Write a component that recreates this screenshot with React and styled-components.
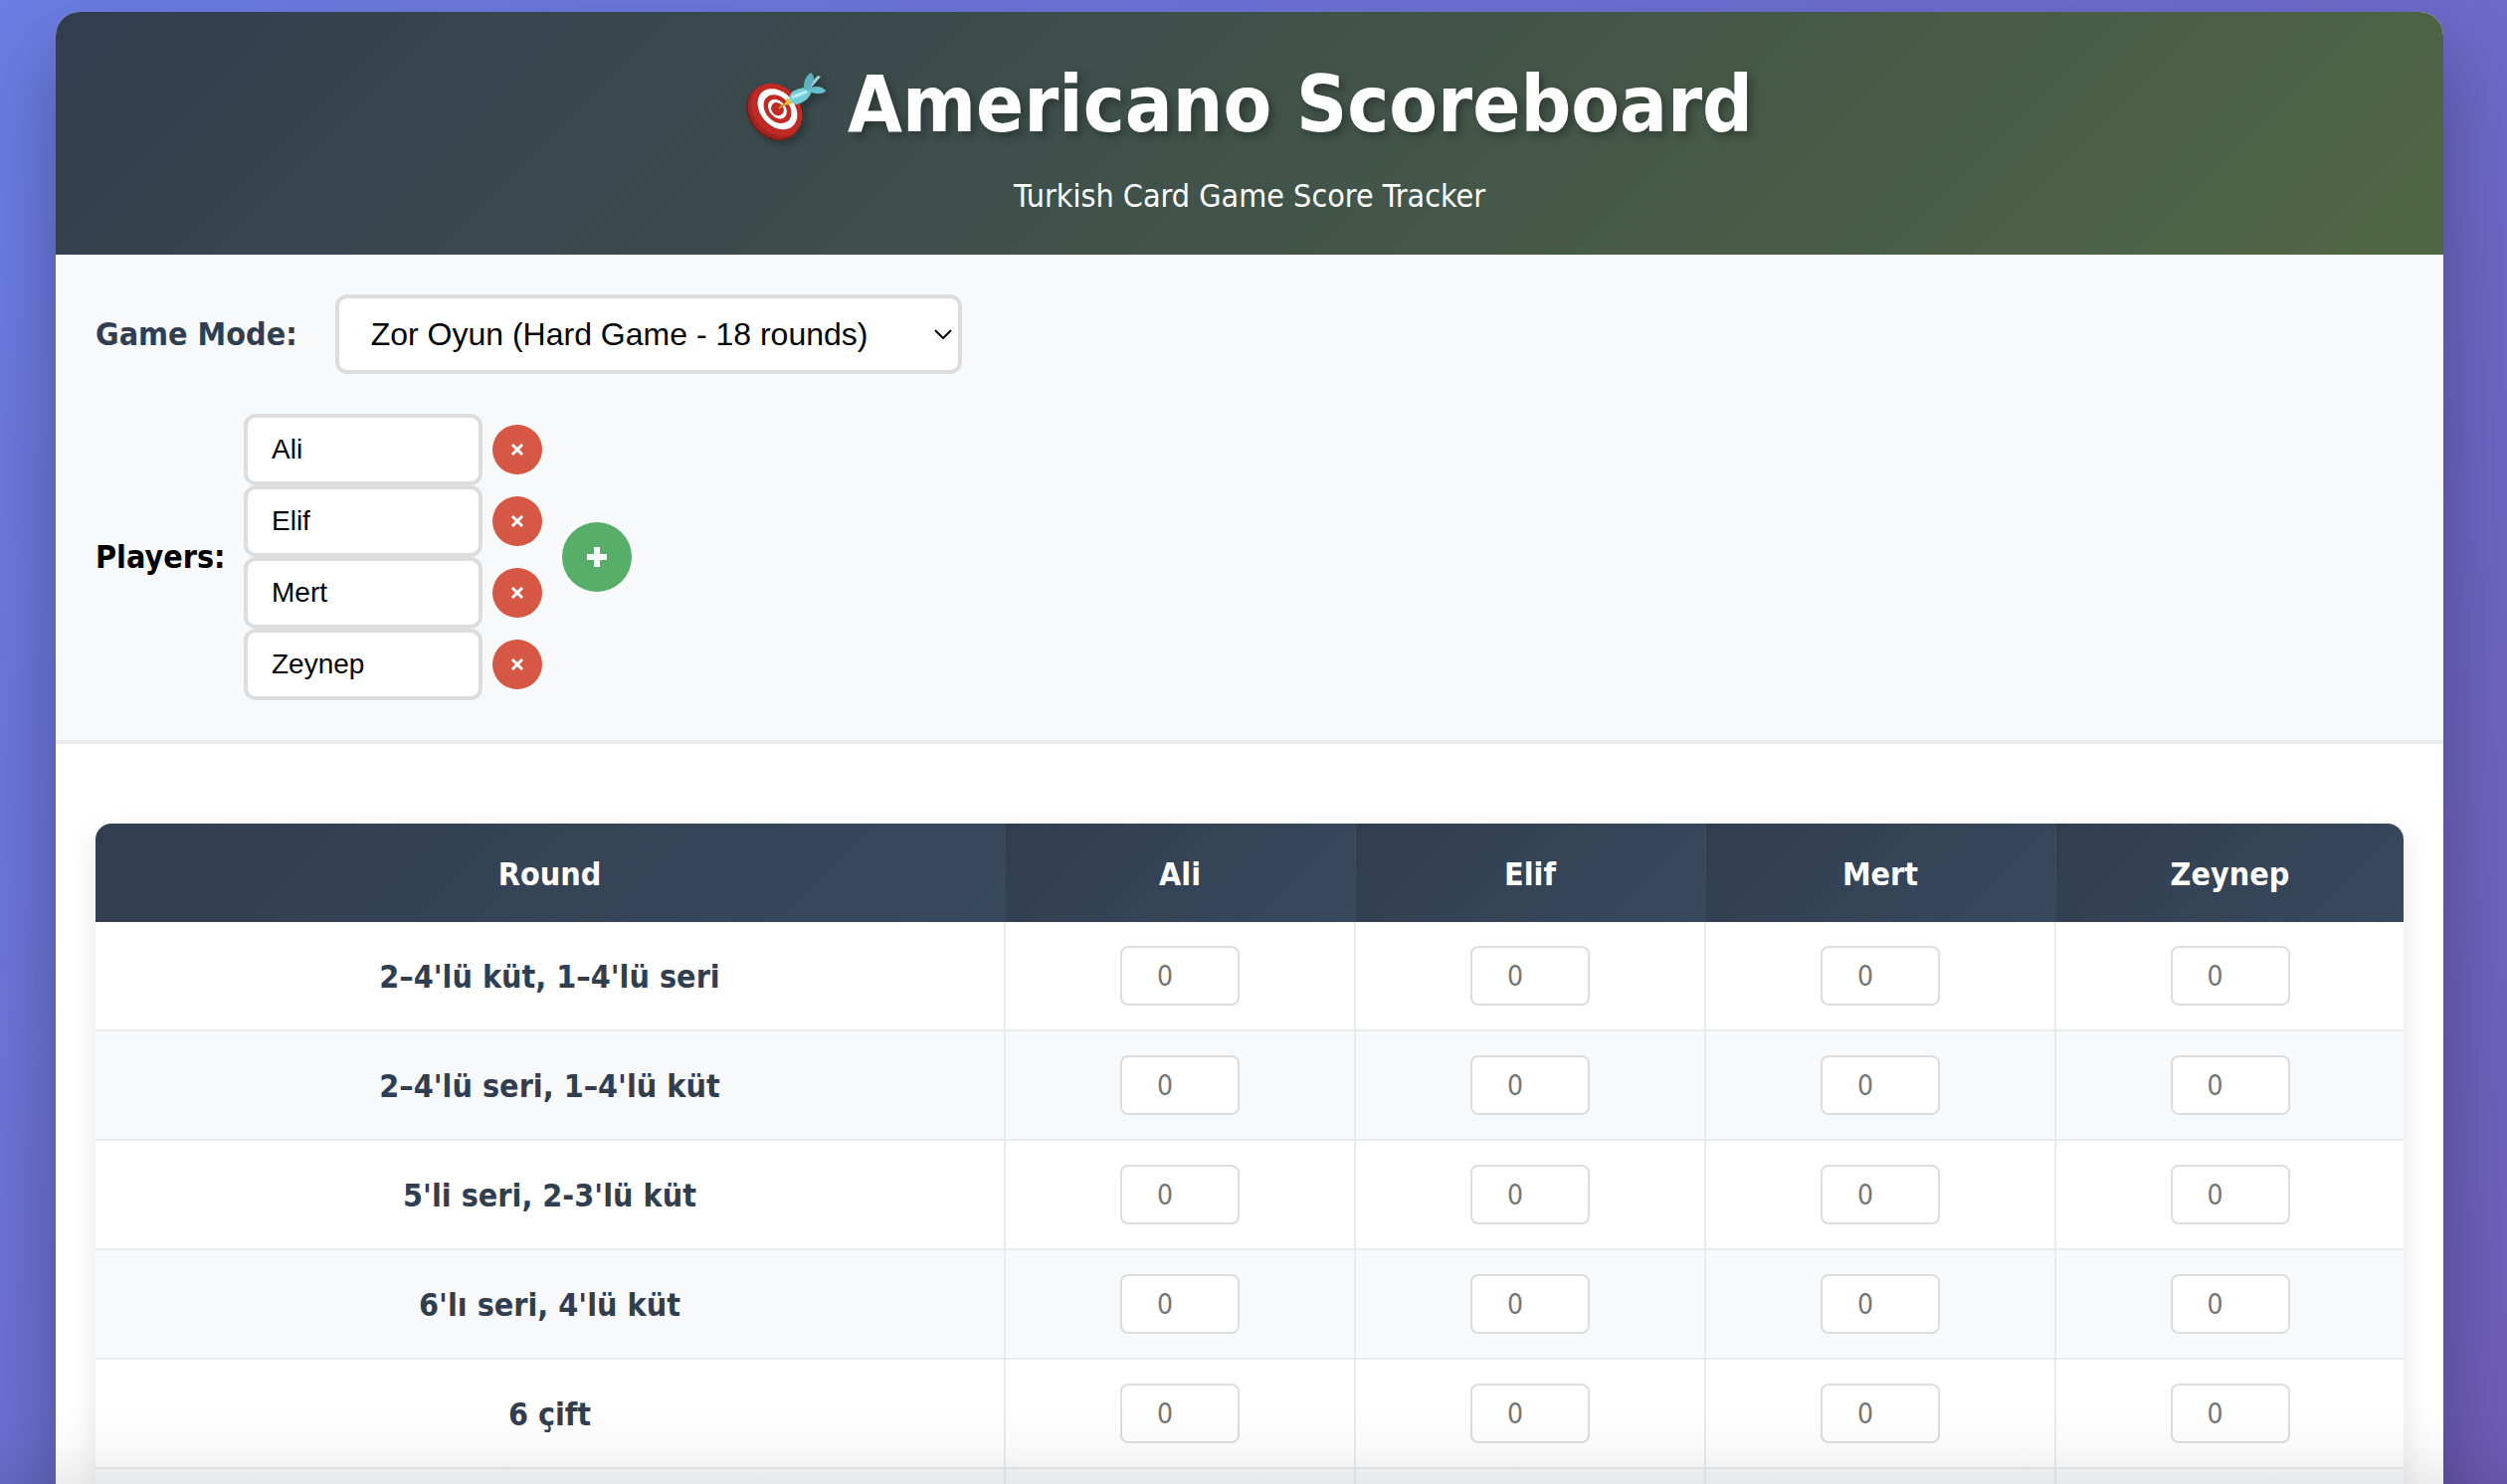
import React, { useState } from "react";
import styled, { createGlobalStyle } from "styled-components";

const ui = `"DejaVu Sans Condensed", "DejaVu Sans", sans-serif`;
const plain = `"Liberation Sans", Arial, sans-serif`;

const GlobalStyle = createGlobalStyle`
  * { box-sizing: border-box; }
  body { margin: 0; font-family: ${ui}; font-stretch: condensed; }
  input, button, select { margin: 0; }
`;

const Page = styled.div`
  position: relative;
  height: 100vh;
  overflow: hidden;
  padding: 12px 64px 0 56px;
  background: linear-gradient(135deg, #6b7de3 0%, #7050a6 143%);
`;

const Card = styled.main`
  background: #fff;
  border-radius: 24px 24px 0 0;
  box-shadow: 0 40px 80px rgba(0, 0, 0, 0.3);
  overflow: hidden;
`;

const Header = styled.header`
  padding: 44px 40px 36px;
  text-align: center;
  color: #fff;
  background: linear-gradient(135deg, #313e50 0%, #506744 100%);
`;

const Title = styled.h1`
  display: flex;
  align-items: center;
  justify-content: center;
  gap: 22px;
  margin: 0 0 20px;
  font-size: 79px;
  line-height: 98px;
  font-weight: 700;
  text-shadow: 4px 4px 8px rgba(0, 0, 0, 0.3);
`;

const Dart = styled.svg`
  width: 80px;
  height: 76px;
  filter: drop-shadow(4px 4px 4px rgba(0, 0, 0, 0.3));
`;

const Subtitle = styled.p`
  margin: 0;
  font-size: 32px;
  line-height: 46px;
`;

const Controls = styled.section`
  display: flex;
  flex-direction: column;
  gap: 40px;
  padding: 40px;
  background: #f8f9fb;
  border-bottom: 4px solid #e9ebef;
`;

const ModeRow = styled.div`
  display: flex;
  align-items: center;
  gap: 38px;
`;

const Label = styled.label`
  color: #313e50;
  font-size: 32px;
  font-weight: 700;
`;

const SelectBox = styled.div`
  position: relative;
  width: 630px;
`;

const Select = styled.select`
  appearance: none;
  display: block;
  width: 100%;
  height: 80px;
  padding: 0 60px 0 32px;
  border: 4px solid #ddd;
  border-radius: 12px;
  background: #fff;
  color: #000;
  font-family: ${plain};
  font-size: 32px;
`;

const Chevron = styled.svg`
  position: absolute;
  right: 10px;
  top: 50%;
  width: 18px;
  height: 10px;
  margin-top: -5px;
  pointer-events: none;
  fill: none;
  stroke: #000;
  stroke-width: 2;
`;

const PlayersRow = styled.div`
  display: flex;
  align-items: center;
  gap: 20px;
`;

const PlayersLabel = styled.span`
  width: 129px;
  color: #000;
  font-size: 32px;
  font-weight: 700;
`;

const PlayerList = styled.div`
  display: flex;
  flex-direction: column;
`;

const Player = styled.div`
  display: flex;
  align-items: center;
  gap: 10px;
`;

const NameInput = styled.input`
  width: 240px;
  height: 72px;
  padding: 0 24px;
  border: 4px solid #ddd;
  border-radius: 12px;
  background: #fff;
  color: #000;
  font-family: ${plain};
  font-size: 28px;
`;

const RoundButton = styled.button`
  display: flex;
  align-items: center;
  justify-content: center;
  width: ${(p) => p.$size}px;
  height: ${(p) => p.$size}px;
  padding: 0;
  border: 0;
  border-radius: 50%;
  background: ${(p) => p.$color};
  color: #fff;
`;

const Scores = styled.section`
  padding: 80px 40px 40px;
`;

const Table = styled.table`
  width: 100%;
  table-layout: fixed;
  border-collapse: separate;
  border-spacing: 0;
  border-radius: 16px;
  overflow: hidden;
  box-shadow: 0 10px 30px rgba(0, 0, 0, 0.1);
`;

const HeadCell = styled.th`
  height: 99px;
  padding: 2px 0 0;
  border-right: 2px solid #374a5e;
  background: linear-gradient(135deg, #323e4f, #37495e);
  color: #fff;
  font-size: 32px;
  &:last-child { border-right: 0; }
`;

const RoundCol = styled.col`
  width: 915px;
`;

const PlayerCol = styled.col`
  width: 352px;
  &:last-child { width: auto; }
`;

const Row = styled.tr`
  background: #fff;
  &:nth-child(even) { background: #f8f9fb; }
`;

const cell = `
  height: 110px;
  padding: 0;
  border-right: 2px solid #e9ebef;
  border-bottom: 2px solid #e9ebef;
  text-align: center;
  &:last-child { border-right: 0; }
`;

const RoundCell = styled.th`
  ${cell}
  padding-top: 2px;
  color: #313e50;
  font-size: 32px;
`;

const ScoreCell = styled.td`
  ${cell}
`;

const ScoreInput = styled.input`
  width: 120px;
  height: 60px;
  padding: 0 44px 0 14px;
  border: 2px solid #ddd;
  border-radius: 8px;
  background: #fff;
  text-align: center;
  font-family: ${ui};
  font-stretch: condensed;
  font-size: 28px;
  vertical-align: middle;
  &::placeholder { color: #757575; opacity: 1; }
`;

const BottomShade = styled.div`
  position: absolute;
  left: 0;
  right: 0;
  bottom: 0;
  height: 80px;
  pointer-events: none;
  background: linear-gradient(to bottom, rgba(0, 0, 0, 0), rgba(0, 0, 0, 0.02) 50%, rgba(0, 0, 0, 0.07));
`;

const rounds = [
  "2–4'lü küt, 1–4'lü seri",
  "2–4'lü seri, 1–4'lü küt",
  "5'li seri, 2-3'lü küt",
  "6'lı seri, 4'lü küt",
  "6 çift",
  "",
];

function Target() {
  return (
    <Dart viewBox="0 -6 80 76" aria-hidden="true">
      <g transform="rotate(48 30 38)">
        <ellipse cx="30" cy="42" rx="30" ry="24" fill="#7d1714" />
        <ellipse cx="30" cy="40" rx="30" ry="24" fill="#a32320" />
        <ellipse cx="30" cy="37" rx="29" ry="23" fill="#bf2a25" />
        <ellipse cx="30" cy="36" rx="23" ry="17" fill="#fff" />
        <ellipse cx="30" cy="36" rx="16" ry="12" fill="#bf2a25" />
        <ellipse cx="30" cy="36" rx="11" ry="8" fill="#fff" />
        <ellipse cx="30" cy="36" rx="7" ry="6" fill="#bf2a25" />
      </g>
      <path d="M33 36L42 29" stroke="#c99a22" strokeWidth="2" />
      <path d="M39 33L41 25L47 31z" fill="#e6bd35" />
      <path d="M43 25q2-8 15-10l8 3q-2 10-15 14q-6 0-8-7z" fill="#72cbd6" />
      <path d="M46 25q8-3 15-6" stroke="#b4eef3" strokeWidth="3" fill="none" />
      <path d="M59 17L72 3l3 1L63 18z" fill="#a9ced3" />
      <path d="M58 17q-1-12 7-17q5 4 2 10l-4 8z" fill="#5bb2be" />
      <path d="M61 18q7-6 15-3q4 2 4 4q-7 5-19-1z" fill="#65bfca" />
    </Dart>
  );
}

export default function App() {
  const [players, setPlayers] = useState(["Ali", "Elif", "Mert", "Zeynep"]);
  const rename = (i, v) => setPlayers(players.map((p, n) => (n === i ? v : p)));
  const remove = (i) => setPlayers(players.filter((_, n) => n !== i));
  return (
    <Page>
      <GlobalStyle />
      <Card>
        <Header>
          <Title><Target />Americano Scoreboard</Title>
          <Subtitle>Turkish Card Game Score Tracker</Subtitle>
        </Header>
        <Controls>
          <ModeRow>
            <Label htmlFor="mode">Game Mode:</Label>
            <SelectBox>
              <Select id="mode" defaultValue="hard">
                <option value="hard">Zor Oyun (Hard Game - 18 rounds)</option>
              </Select>
              <Chevron viewBox="0 0 18 10"><path d="M1 1L9 9L17 1" /></Chevron>
            </SelectBox>
          </ModeRow>
          <PlayersRow>
            <PlayersLabel>Players:</PlayersLabel>
            <PlayerList>
              {players.map((name, i) => (
                <Player key={i}>
                  <NameInput aria-label={`Player ${i + 1}`} value={name} onChange={(e) => rename(i, e.target.value)} />
                  <RoundButton $size={50} $color="#d65745" aria-label={`Remove ${name}`} onClick={() => remove(i)}>
                    <svg width="12" height="12" viewBox="0 0 12 12" stroke="#fff" strokeWidth="3"><path d="M1 1L11 11M11 1L1 11" /></svg>
                  </RoundButton>
                </Player>
              ))}
            </PlayerList>
            <RoundButton $size={70} $color="#56ae68" aria-label="Add player" onClick={() => setPlayers([...players, ""])}>
              <svg width="20" height="20" viewBox="0 0 20 20" stroke="#fff" strokeWidth="6"><path d="M10 0V20M0 10H20" /></svg>
            </RoundButton>
          </PlayersRow>
        </Controls>
        <Scores>
          <Table>
            <colgroup>
              <RoundCol />
              {players.map((_, i) => <PlayerCol key={i} />)}
            </colgroup>
            <thead>
              <tr>
                <HeadCell scope="col">Round</HeadCell>
                {players.map((name, i) => <HeadCell key={i} scope="col">{name}</HeadCell>)}
              </tr>
            </thead>
            <tbody>
              {rounds.map((round, r) => (
                <Row key={r}>
                  <RoundCell scope="row">{round}</RoundCell>
                  {players.map((name, i) => (
                    <ScoreCell key={i}>
                      <ScoreInput inputMode="numeric" placeholder="0" aria-label={`${name}, ${round}`} />
                    </ScoreCell>
                  ))}
                </Row>
              ))}
            </tbody>
          </Table>
        </Scores>
      </Card>
      <BottomShade />
    </Page>
  );
}
